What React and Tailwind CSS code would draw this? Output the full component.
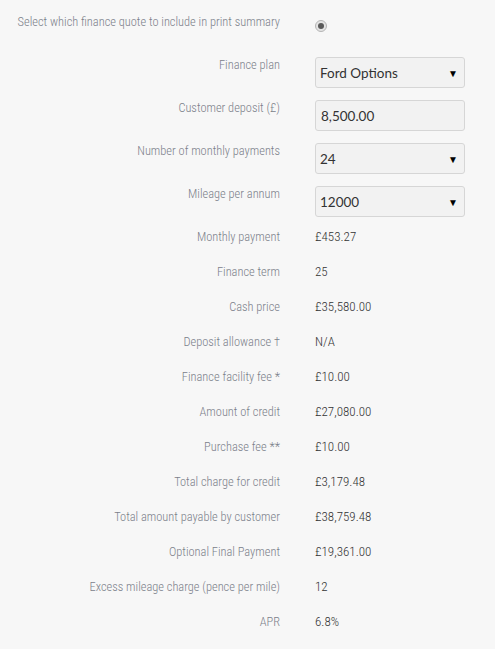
import React from 'react';

const Field = ({ label, children, tall }) => (
  <div className={`flex items-start ${tall ? 'h-[43px]' : 'h-[35px]'}`}>
    <div className="w-[280px] shrink-0 whitespace-nowrap text-right font-['Roboto_Condensed',sans-serif] text-[12.4px] font-light leading-[15px] text-[#7b808a]">
      {label}
    </div>
    <div className="ml-[35px] font-['Roboto_Condensed',sans-serif] text-[13px] font-light leading-[15px] text-[#333]">
      {children}
    </div>
  </div>
);

const Select = ({ value }) => (
  <div className="relative flex h-[31px] w-[150px] items-center rounded-[3px] border border-[#d6d6d6] bg-[#f2f2f2] pl-[4px] pt-[1px] font-['Lato',sans-serif] text-[13.5px] font-normal text-[#333]">
    {value}
    <span className="absolute right-[6px] top-[8px] text-[10px] text-black">▼</span>
  </div>
);

const Input = ({ value }) => (
  <div className="flex h-[31px] w-[150px] items-center rounded-[3px] border border-[#d6d6d6] bg-[#f2f2f2] pl-[5px] pt-[1px] font-['Lato',sans-serif] text-[13.5px] font-normal text-[#333]">
    {value}
  </div>
);

const rows = [
  ['Monthly payment', '£453.27'],
  ['Finance term', '25'],
  ['Cash price', '£35,580.00'],
  ['Deposit allowance †', 'N/A'],
  ['Finance facility fee *', '£10.00'],
  ['Amount of credit', '£27,080.00'],
  ['Purchase fee **', '£10.00'],
  ['Total charge for credit', '£3,179.48'],
  ['Total amount payable by customer', '£38,759.48'],
  ['Optional Final Payment', '£19,361.00'],
  ['Excess mileage charge (pence per mile)', '12'],
  ['APR', '6.8%'],
];

export default function App() {
  return (
    <div className="min-h-[649px] w-[495px] bg-[#f7f7f7] pt-[14px]">
      <Field label="Select which finance quote to include in print summary" tall>
        <span className="mt-[6px] flex h-[12px] w-[12px] items-center justify-center rounded-full border border-[#b5b5b5] bg-[#e4e4e4]">
          <span className="h-[6px] w-[6px] rounded-full bg-[#5a5a5a]" />
        </span>
      </Field>
      <Field label="Finance plan" tall><Select value="Ford Options" /></Field>
      <Field label="Customer deposit (£)" tall><Input value="8,500.00" /></Field>
      <Field label="Number of monthly payments" tall><Select value="24" /></Field>
      <Field label="Mileage per annum" tall><Select value="12000" /></Field>
      {rows.map(([l, v]) => (
        <Field key={l} label={l}>{v}</Field>
      ))}
    </div>
  );
}
